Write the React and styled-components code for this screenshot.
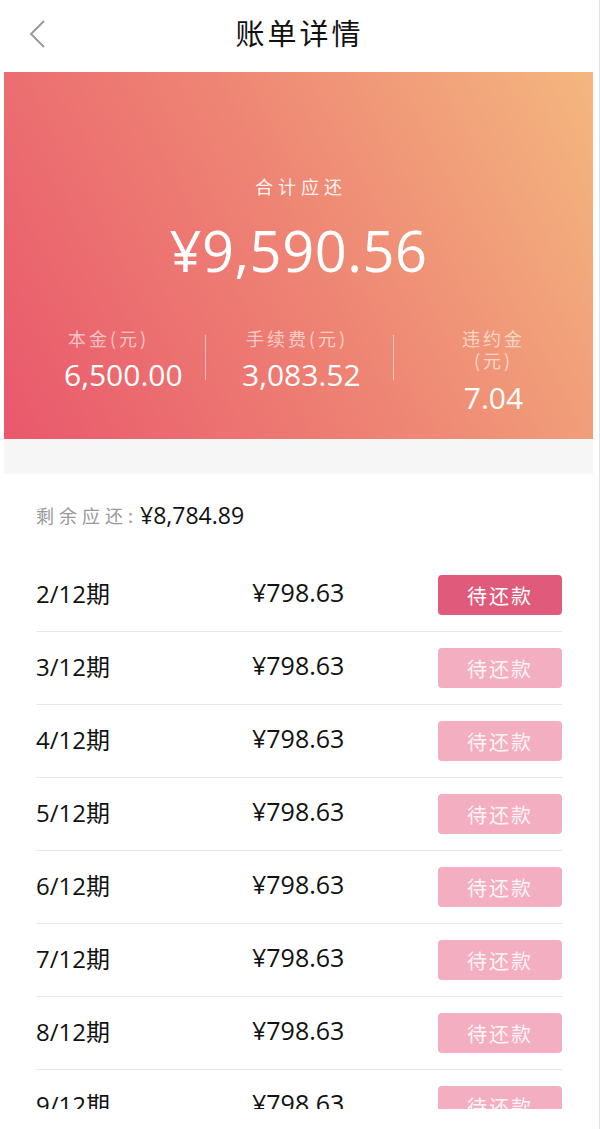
import React from 'react';
import styled, { createGlobalStyle } from 'styled-components';

const GlobalStyle = createGlobalStyle`
  html, body {
    margin: 0;
    padding: 0;
    background: #fff;
  }
  body {
    font-family: "Open Sans", "Noto Sans CJK SC", sans-serif;
  }
`;

const Page = styled.div`
  width: 599px;
  height: 1129px;
  border-right: 1px solid #e2e2e2;
  background: #fff;
`;

const Viewport = styled.div`
  height: 1109px;
  overflow: hidden;
`;

const Header = styled.header`
  position: relative;
  height: 72px;
  box-sizing: border-box;
  padding-bottom: 8px;
  display: flex;
  align-items: center;
  justify-content: center;
`;

const BackButton = styled.button`
  position: absolute;
  left: 22px;
  top: 16px;
  width: 32px;
  height: 36px;
  padding: 0;
  border: 0;
  background: none;
  display: flex;
  align-items: center;
  justify-content: center;
`;

const Title = styled.h1`
  margin: 0;
  font-family: "Noto Sans CJK SC", sans-serif;
  font-weight: 400;
  font-size: 29px;
  letter-spacing: 3px;
  color: #111;
`;

const Body = styled.div`
  padding: 0 6px 0 4px;
`;

const Hero = styled.section`
  height: 367px;
  background: linear-gradient(62deg, #e9586c 0%, #ee8474 50%, #f4b77f 100%);
  display: flex;
  flex-direction: column;
  align-items: center;
  color: #fff;
`;

const HeroLabel = styled.div`
  margin-top: 100px;
  font-family: "Noto Sans CJK SC", sans-serif;
  font-size: 18px;
  letter-spacing: 5px;
  padding-left: 5px;
  color: rgba(255, 255, 255, 0.92);
  line-height: 28px;
`;

const HeroAmount = styled.div`
  margin-top: 18px;
  font-family: "Open Sans", sans-serif;
  font-size: 56px;
  line-height: 64px;
  letter-spacing: 0.5px;
`;

const Stats = styled.div`
  align-self: stretch;
  margin-top: 45px;
  display: grid;
  grid-template-columns: 201px 1px 187px 1px 1fr;
  align-items: start;
`;

const Stat = styled.div`
  display: flex;
  flex-direction: column;
  align-items: ${p => (p.$center ? 'center' : 'flex-start')};
  padding-left: ${p => p.$pad || 0}px;
  text-align: ${p => (p.$center ? 'center' : 'left')};
`;

const StatLabel = styled.div`
  font-family: "Noto Sans CJK SC", sans-serif;
  font-size: 18px;
  line-height: 22px;
  letter-spacing: 3px;
  padding-left: ${p => (p.$narrow ? 0 : 4)}px;
  color: rgba(255, 255, 255, 0.62);
  max-width: ${p => (p.$narrow ? '80px' : 'none')};
`;

const StatValue = styled.div`
  margin-top: ${p => (p.$gap || 7)}px;
  font-family: "Open Sans", sans-serif;
  font-size: 30px;
  line-height: 38px;
  color: #fff;
`;

const Divider = styled.div`
  margin-top: 8px;
  height: 45px;
  background: rgba(255, 255, 255, 0.55);
`;

const Band = styled.div`
  height: 35px;
  background: #f6f6f6;
`;

const Remaining = styled.div`
  padding: 27px 32px 0;
  height: 84px;
  box-sizing: border-box;
  display: flex;
  align-items: flex-start;
  line-height: 28px;
`;

const RemainingLabel = styled.span`
  font-family: "Noto Sans CJK SC", sans-serif;
  font-size: 18px;
  color: #999;
  letter-spacing: 5px;
`;

const RemainingValue = styled.span`
  margin-left: 2px;
  font-family: "Open Sans", sans-serif;
  font-size: 23px;
  color: #111;
`;

const List = styled.ul`
  list-style: none;
  margin: 0;
  padding: 0 31px 0 32px;
`;

const Row = styled.li`
  height: 72px;
  border-top: 1px solid ${p => (p.$first ? 'transparent' : '#e7e7e7')};
  display: flex;
  align-items: center;
`;

const Period = styled.span`
  width: 216px;
  margin-bottom: 6px;
  font-family: "Open Sans", "Noto Sans CJK SC", sans-serif;
  font-size: 24px;
  color: #111;
`;

const Amount = styled.span`
  flex: 1;
  margin-bottom: 6px;
  font-family: "Open Sans", sans-serif;
  font-size: 25px;
  color: #111;
`;

const PayButton = styled.button`
  width: 124px;
  height: 40px;
  border: 0;
  border-radius: 4px;
  background: ${p => (p.$active ? '#e05a7b' : '#f4aec1')};
  color: ${p => (p.$active ? '#fff' : 'rgba(255,255,255,0.9)')};
  font-family: "Noto Sans CJK SC", sans-serif;
  font-size: 20px;
  letter-spacing: 2px;
`;

const periods = [2, 3, 4, 5, 6, 7, 8, 9, 10, 11, 12];

export default function App() {
  return (
    <>
      <GlobalStyle />
      <Page>
        <Viewport>
          <Header>
            <BackButton aria-label="返回">
              <svg width="20" height="32" viewBox="0 0 20 32">
                <path d="M16 3 L3 16 L16 29" fill="none" stroke="#9a9a9a" strokeWidth="2" />
              </svg>
            </BackButton>
            <Title>账单详情</Title>
          </Header>
          <Body>
            <Hero>
              <HeroLabel>合计应还</HeroLabel>
              <HeroAmount>¥9,590.56</HeroAmount>
              <Stats>
                <Stat $pad={60}>
                  <StatLabel>本金(元)</StatLabel>
                  <StatValue>6,500.00</StatValue>
                </Stat>
                <Divider />
                <Stat $pad={36}>
                  <StatLabel>手续费(元)</StatLabel>
                  <StatValue>3,083.52</StatValue>
                </Stat>
                <Divider />
                <Stat $center>
                  <StatLabel $narrow>违约金(元)</StatLabel>
                  <StatValue $gap={8}>7.04</StatValue>
                </Stat>
              </Stats>
            </Hero>
            <Band />
            <Remaining>
              <RemainingLabel>剩余应还:</RemainingLabel>
              <RemainingValue>¥8,784.89</RemainingValue>
            </Remaining>
            <List>
              {periods.map((n, i) => (
                <Row key={n} $first={i === 0}>
                  <Period>{n}/12期</Period>
                  <Amount>¥798.63</Amount>
                  <PayButton $active={i === 0}>待还款</PayButton>
                </Row>
              ))}
            </List>
          </Body>
        </Viewport>
      </Page>
    </>
  );
}
